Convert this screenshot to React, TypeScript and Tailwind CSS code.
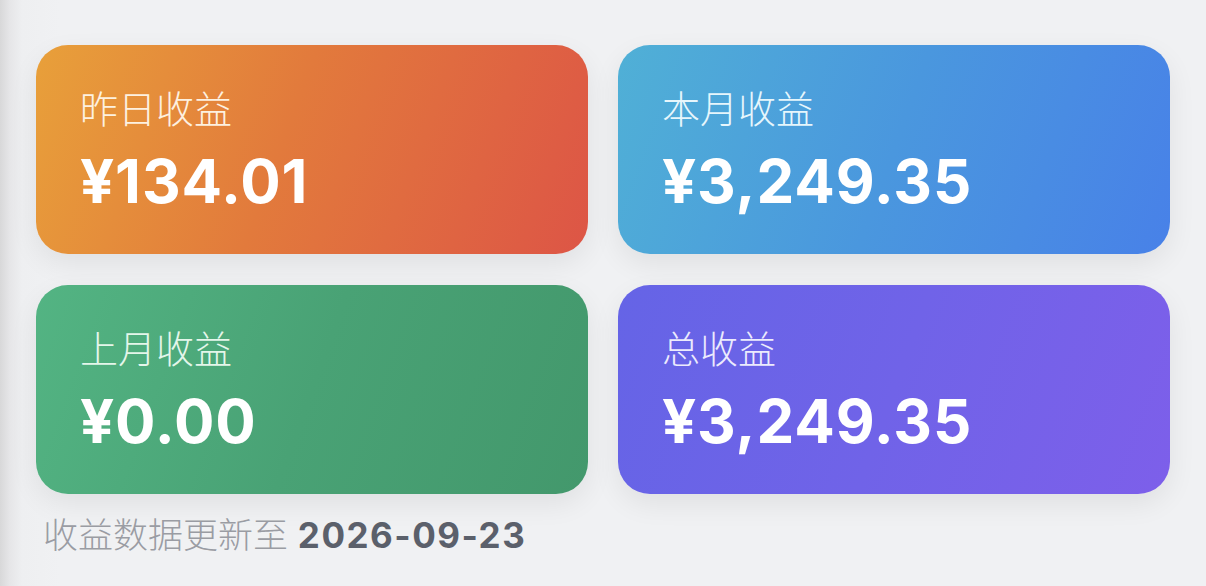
import * as React from 'react';

// Earnings summary cards
type Stat = { label: string; value: string; bg: string; labelColor: string };

const stats: Stat[] = [
  {
    label: '昨日收益',
    value: '¥134.01',
    bg: 'bg-[linear-gradient(110deg,#e8a03a_0%,#e27a3c_45%,#dd5546_100%)]',
    labelColor: 'text-[#fdf1e0]',
  },
  {
    label: '本月收益',
    value: '¥3,249.35',
    bg: 'bg-[linear-gradient(110deg,#50b0d6_0%,#4a97de_50%,#4881e8_100%)]',
    labelColor: 'text-[#e6f6fc]',
  },
  {
    label: '上月收益',
    value: '¥0.00',
    bg: 'bg-[linear-gradient(110deg,#53b483_0%,#49a275_50%,#43986c_100%)]',
    labelColor: 'text-[#e4f6ea]',
  },
  {
    label: '总收益',
    value: '¥3,249.35',
    bg: 'bg-[linear-gradient(110deg,#6564e6_0%,#7063e8_50%,#7d5fea_100%)]',
    labelColor: 'text-[#ecebfd]',
  },
];

const StatCard = ({ stat }: { stat: Stat }) => (
  <div
    className={[
      'h-[209px] rounded-[32px] pl-[44px] pt-[40px] text-white shadow-[0_10px_28px_rgba(0,0,0,0.07)]',
      stat.bg,
    ].join(' ')}
  >
    <div className={`text-[38px] leading-[48px] font-light ${stat.labelColor}`}>{stat.label}</div>
    <div className="mt-[12px] text-[60px] leading-[72px] font-bold tracking-[0.9px]">{stat.value}</div>
  </div>
);

export default function App() {
  return (
    <div
      className="w-[1206px] h-[586px] overflow-hidden bg-[linear-gradient(90deg,#d8d8d9_0px,#e6e6e8_10px,#eeeff1_22px,#f0f1f3_60px)]"
      style={{ fontFamily: 'Inter, "Noto Sans CJK SC", sans-serif' }}
    >
      <div className="pl-[36px] pt-[45px] w-[1206px]">
        <div className="grid grid-cols-[552px_552px] gap-x-[30px] gap-y-[31px]">
          {stats.map((s) => (
            <StatCard key={s.label} stat={s} />
          ))}
        </div>
        <div className="mt-[18px] pl-[7px] text-[35px] leading-[46px]">
          <span className="font-light text-[#9a9ca3]">收益数据更新至 </span>
          <span className="font-bold tracking-[1.5px] text-[#5b606b]">2026-09-23</span>
        </div>
      </div>
    </div>
  );
}
